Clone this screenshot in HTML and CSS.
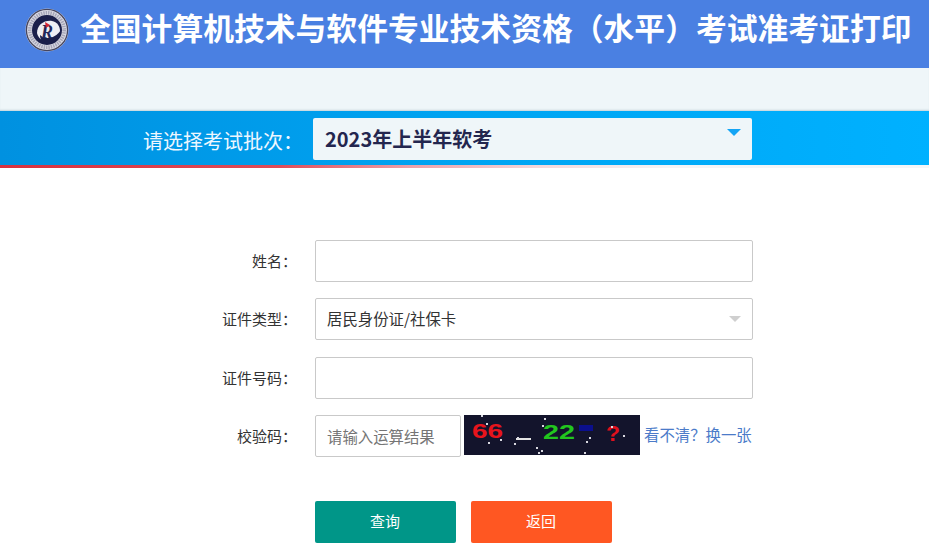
FILE: index.html
```html
<!DOCTYPE html>
<html lang="zh-CN">
<head>
<meta charset="utf-8">
<title>全国计算机技术与软件专业技术资格（水平）考试准考证打印</title>
<link rel="stylesheet" href="styles.css">
</head>
<body>
<header class="header">
  <svg class="logo" viewBox="0 0 44 44" aria-hidden="true">
    <circle cx="22" cy="22" r="21.5" fill="#d9d9e2"/>
    <circle cx="22" cy="22" r="20.6" fill="none" stroke="#45455f" stroke-width="1.3"/>
    <circle cx="22" cy="22" r="17.2" fill="none" stroke="#a5a5b8" stroke-width="3.6" stroke-dasharray="1.4 1"/>
    <circle cx="22" cy="22" r="15" fill="#1b1f4a"/>
    <path d="M12 25C12 17 19 12 27 13C32 14 35 18 35 23C34 29 28 33 22 33C17 33 13 30 12 25Z" fill="#eeeef4"/>
    <path d="M15 27C20 32 30 31 36 22C36 31 28 37 20 35C17 34 15 31 15 27Z" fill="#1b1f4a"/>
    <text class="logo-r" x="16" y="30">R</text>
    <path d="M20 14L25 17L21 20Z" fill="#d8232f"/>
  </svg>
  <h1 class="title">全国计算机技术与软件专业技术资格（水平）考试准考证打印</h1>
</header>
<div class="band"></div>
<section class="batch">
  <span class="batch-label">请选择考试批次：</span>
  <div class="batch-select">
    <span>2023年上半年软考</span>
    <i class="batch-arrow"></i>
  </div>
</section>
<div class="redline"></div>
<form class="form">
  <div class="row">
    <label class="label">姓名：</label>
    <input class="field" type="text">
  </div>
  <div class="row">
    <label class="label">证件类型：</label>
    <div class="field field-select">
      <span>居民身份证/社保卡</span>
      <i class="select-arrow"></i>
    </div>
  </div>
  <div class="row">
    <label class="label">证件号码：</label>
    <input class="field" type="text">
  </div>
  <div class="row row-code">
    <label class="label">校验码：</label>
    <input class="field field-code" type="text" placeholder="请输入运算结果">
    <svg class="captcha" viewBox="0 0 176 40" aria-label="验证码">
      <rect width="176" height="40" fill="#13142c"/>
      <text class="cap-num" x="8" y="23" fill="#e8141c" textLength="31" lengthAdjust="spacingAndGlyphs">66</text>
      <rect x="52" y="23" width="15" height="2" fill="#e4e4e4"/>
      <text class="cap-num" x="79" y="24" fill="#22c51e" textLength="32" lengthAdjust="spacingAndGlyphs">22</text>
      <rect x="115" y="10" width="14" height="6" fill="#0b0f8c"/>
      <text class="cap-q" x="142" y="26" fill="#e0101c" textLength="14" lengthAdjust="spacingAndGlyphs">?</text>
      <g fill="#d8d8e0">
        <rect x="17" y="0" width="2" height="2"/><rect x="22" y="8" width="2" height="2"/>
        <rect x="24" y="27" width="2" height="2"/><rect x="36" y="24" width="2" height="2"/>
        <rect x="50" y="28" width="2" height="2"/><rect x="53" y="22" width="2" height="2"/>
        <rect x="80" y="3" width="2" height="2"/><rect x="78" y="10" width="2" height="2"/>
        <rect x="72" y="32" width="2" height="2"/><rect x="74" y="37" width="2" height="2"/>
        <rect x="77" y="35" width="2" height="2"/><rect x="120" y="37" width="2" height="2"/>
        <rect x="122" y="26" width="2" height="2"/><rect x="125" y="22" width="2" height="2"/>
        <rect x="147" y="11" width="2" height="2"/><rect x="159" y="20" width="2" height="2"/>
      </g>
    </svg>
    <a class="refresh" href="#">看不清？换一张</a>
  </div>
  <div class="actions">
    <button class="btn btn-query" type="button">查询</button>
    <button class="btn btn-back" type="button">返回</button>
  </div>
</form>
</body>
</html>
```
FILE: styles.css
```css
* { box-sizing: border-box; }
html, body { margin: 0; padding: 0; }
body {
  width: 929px;
  height: 552px;
  overflow: hidden;
  background: #fff;
  color: #333;
  font-family: "Noto Sans CJK SC", "Liberation Sans", sans-serif;
}
.header {
  height: 68px;
  background: #4a80e2;
  display: flex;
  align-items: flex-start;
  padding: 8px 0 0 25px;
}
.logo { width: 44px; height: 44px; flex: none; margin-right: 11px; }
.logo-r {
  font-family: "Liberation Serif", serif;
  font-style: italic;
  font-weight: 700;
  font-size: 18px;
  fill: #23275a;
}
.title {
  margin: -3px 0 0;
  font-size: 30.8px;
  line-height: 44px;
  font-weight: 700;
  color: #fff;
  white-space: nowrap;
}
.band {
  height: 43px;
  background: #eff6f9;
  box-shadow: inset 0 -2px 2px -1px #c3d2da;
}
.batch {
  height: 54px;
  background: linear-gradient(90deg, #0091e0 0%, #00a4f2 50%, #00b1ff 100%);
  display: flex;
  align-items: flex-start;
  padding: 7px 177px 0 143px;
}
.batch-label {
  width: 170px;
  flex: none;
  margin-top: 2px;
  font-size: 20px;
  line-height: 42px;
  color: #eef7ff;
  white-space: nowrap;
}
.batch-select {
  width: 439px;
  height: 42px;
  flex: none;
  position: relative;
  background: #eff6f9;
  border-radius: 2px;
  padding: 0 12px;
  font-size: 20px;
  line-height: 42px;
  font-weight: 700;
  color: #23264f;
}
.batch-arrow {
  position: absolute;
  right: 11px;
  top: 11px;
  width: 0;
  height: 0;
  border-style: solid;
  border-width: 7px 7px 0;
  border-color: #14a5f5 transparent transparent;
}
.redline {
  height: 3px;
  background: linear-gradient(90deg, #d8323f 0%, #df4c58 30%, #eca0a8 44%, #f3d8db 58%, #f4f4f6 72%, #f4f6f8 100%);
}
.form { padding-top: 72px; }
.row {
  display: flex;
  align-items: center;
  height: 42px;
  margin-bottom: 16.33px;
}
.label {
  width: 297px;
  margin-right: 1px;
  flex: none;
  padding-bottom: 1px;
  text-align: right;
  font-size: 15px;
  color: #333;
}
.field {
  width: 438px;
  height: 42px;
  margin-left: 17px;
  flex: none;
  display: block;
  background: #fff;
  border: 1px solid #c9c9c9;
  border-radius: 2px;
  padding: 0 11px;
  font: 15.4px/38px "Noto Sans CJK SC", "Liberation Sans", sans-serif;
  color: #333;
  outline: none;
}
.field-select { position: relative; }
.select-arrow {
  position: absolute;
  right: 11px;
  top: 17px;
  width: 0;
  height: 0;
  border-style: solid;
  border-width: 6px 6.5px 0;
  border-color: #cfcfcf transparent transparent;
}
.field-code { width: 146px; }
.field-code::placeholder { color: #757575; opacity: 1; }
.captcha {
  width: 176px;
  height: 40px;
  margin-left: 3px;
  flex: none;
  align-self: flex-start;
}
.cap-num {
  font-family: "Liberation Sans", sans-serif;
  font-weight: 700;
  font-size: 21px;
}
.cap-q {
  font-family: "Liberation Sans", sans-serif;
  font-weight: 700;
  font-size: 22px;
}
.refresh {
  margin-left: 4px;
  white-space: nowrap;
  font-size: 15.4px;
  color: #4b7bc9;
  text-decoration: none;
  position: relative;
  top: -2px;
}
.actions {
  display: flex;
  gap: 15px;
  margin: 44px 0 0 315px;
}
.btn {
  width: 141px;
  height: 42px;
  border: 0;
  border-radius: 2px;
  color: #fff;
  font: 15px/40px "Noto Sans CJK SC", "Liberation Sans", sans-serif;
  padding: 0 1px 2px 0;
}
.btn-query { background: #009688; }
.btn-back { background: #ff5722; }
```
